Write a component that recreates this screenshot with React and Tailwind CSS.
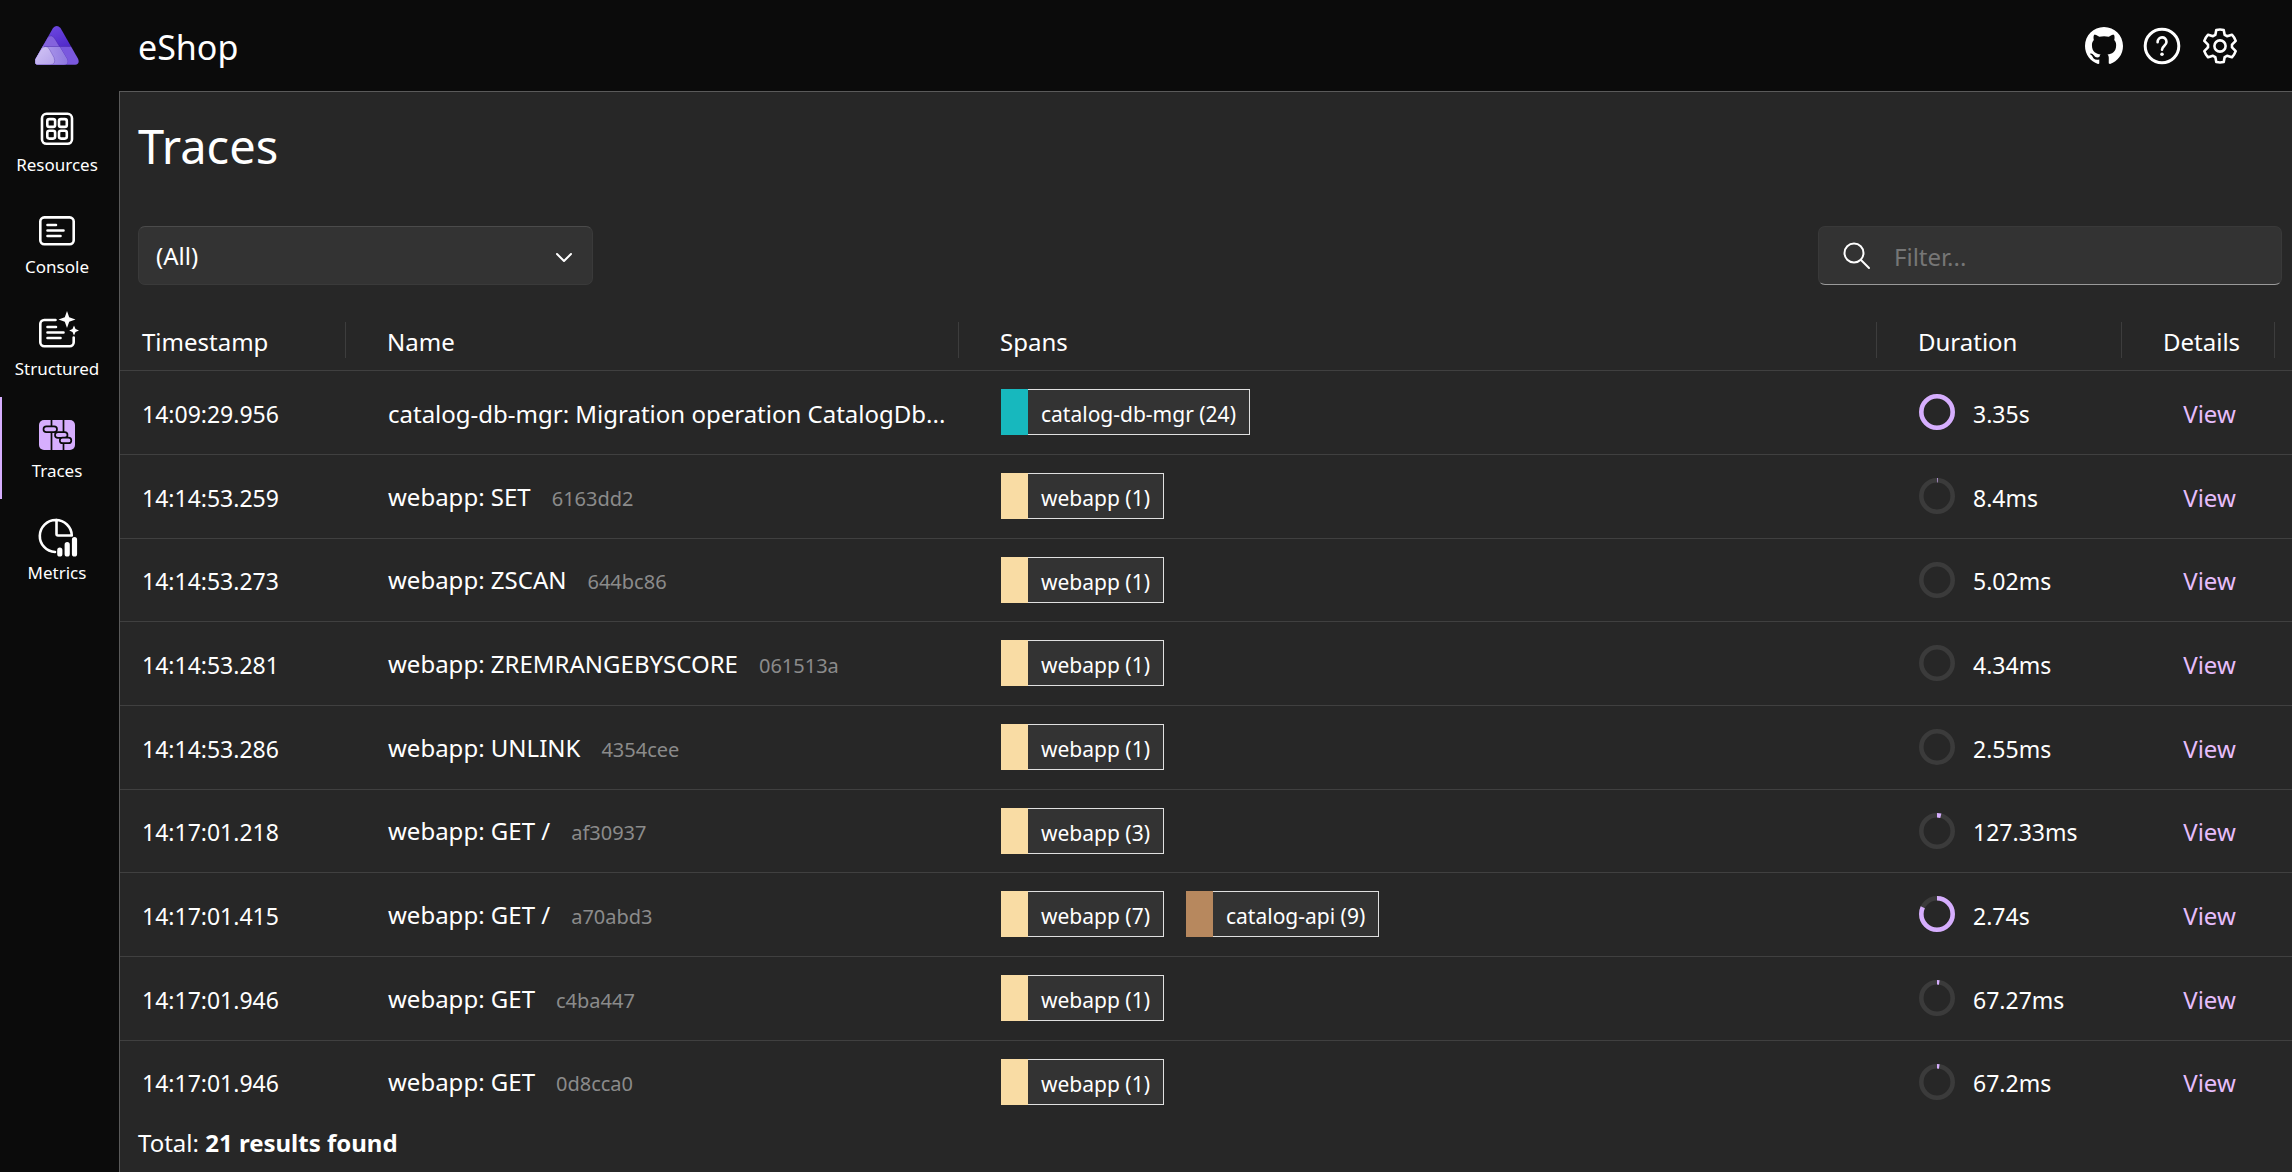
const FONT = "font-['Noto_Sans',sans-serif]";

const stroke = { fill: "none", stroke: "currentColor", strokeLinecap: "round", strokeLinejoin: "round" };

function Logo() {
  return (
    <svg width="44" height="40" viewBox="0 0 44 40" aria-hidden="true">
      <defs>
        <linearGradient id="lg-top" x1="0" y1="0" x2="1" y2="1">
          <stop offset="0.2" stopColor="#6d48e0" />
          <stop offset="1" stopColor="#4a22c4" />
        </linearGradient>
        <linearGradient id="lg-mid" x1="0" y1="0" x2="1" y2="0">
          <stop offset="0.3" stopColor="#ab98ea" />
          <stop offset="1" stopColor="#8f78e0" />
        </linearGradient>
        <linearGradient id="lg-low" x1="0" y1="0" x2="1" y2="1">
          <stop offset="0" stopColor="#d3c6f6" />
          <stop offset="1" stopColor="#b5a3ea" />
        </linearGradient>
        <clipPath id="cp-all">
          <path d="M18 2 Q21.800 -1.800 25.500 2 L43.200 33 Q45 38.700 40 38.700 H4 Q-1.500 38.700 0.500 33 Z" />
        </clipPath>
        <clipPath id="cp-lower">
          <rect y="20.500" width="44" height="20" />
        </clipPath>
      </defs>
      <g clipPath="url(#cp-all)">
        <rect width="44" height="21" fill="url(#lg-top)" />
        <rect y="20.500" width="44" height="19.500" fill="#7a58de" />
        <path id="mid" d="M12.500 11.500 Q16.700 7.500 20 13 L32 33 Q34 38.700 29 38.700 H0 V33 Z" fill="#8463dd" stroke="#3f1fa0" strokeOpacity="0.35" />
        <path d="M12.500 11.500 Q16.700 7.500 20 13 L32 33 Q34 38.700 29 38.700 H0 V33 Z" fill="url(#lg-mid)" clipPath="url(#cp-lower)" />
        <path d="M6.500 22.500 Q11 18.500 14 22.500 L19 31.500 Q21.500 38.700 15 38.700 H0 V33 Z" fill="url(#lg-low)" stroke="#5b3fb5" strokeOpacity="0.4" />
        <path d="M9 20.500 H38" stroke="#4524a8" strokeWidth="0.800" opacity="0.6" />
      </g>
    </svg>
  );
}

function ResourcesIcon() {
  return (
    <svg width="40" height="40" viewBox="0 0 40 40" {...stroke} strokeWidth="2.600" aria-hidden="true">
      <rect x="5" y="4.800" width="30" height="30" rx="4.500" />
      <rect x="10.300" y="10.100" width="7.800" height="7.800" rx="2" />
      <rect x="22" y="10.100" width="7.800" height="7.800" rx="2" />
      <rect x="10.300" y="21.800" width="7.800" height="7.800" rx="2" />
      <rect x="22" y="21.800" width="7.800" height="7.800" rx="2" />
    </svg>
  );
}

function ConsoleIcon() {
  return (
    <svg width="40" height="40" viewBox="0 0 40 40" {...stroke} strokeWidth="2.600" aria-hidden="true">
      <rect x="3.300" y="6.400" width="33.400" height="26.800" rx="4" />
      <path d="M10.500 14 H19 M10.500 19.500 H26.500 M10.500 25 H23.500" />
    </svg>
  );
}

function StructuredIcon() {
  return (
    <svg width="44" height="40" viewBox="0 0 44 40" {...stroke} strokeWidth="2.600" className="overflow-visible" aria-hidden="true">
      <path d="M20.500 7 H9.300 A4 4 0 0 0 5.300 11 V29.300 A4 4 0 0 0 9.300 33.300 H34.700 A4 4 0 0 0 38.700 29.300 V24.500" />
      <path d="M12.500 14 H21 M12.500 19.500 H28.500 M12.500 25 H25.500" />
      <path d="M32 -2 L34.200 4.200 L40.500 6.500 L34.200 8.800 L32 15 L29.800 8.800 L23.500 6.500 L29.800 4.200 Z" fill="currentColor" stroke="none" />
      <path d="M39 12.500 L40.500 16 L44 17.500 L40.500 19 L39 22.500 L37.500 19 L34.200 17.500 L37.500 16 Z" fill="currentColor" stroke="none" />
    </svg>
  );
}

function TracesIcon() {
  return (
    <svg width="40" height="40" viewBox="0 0 40 40" fill="none" aria-hidden="true">
      <rect x="2" y="5" width="36" height="30" rx="5" fill="#d6aefe" />
      <g stroke="#0b0b0b" strokeWidth="1.700">
        <path d="M14.500 5 V35 M26.500 5 V35" />
        <rect x="6.500" y="11.300" width="13.500" height="5.800" rx="2.900" fill="#d6aefe" />
        <rect x="18" y="17.100" width="12.500" height="5.800" rx="2.900" fill="#d6aefe" />
        <rect x="22.800" y="22.600" width="11.500" height="5.600" rx="2.800" fill="#d6aefe" />
      </g>
    </svg>
  );
}

function MetricsIcon() {
  return (
    <svg width="40" height="40" viewBox="0 -1 40 40" {...stroke} strokeWidth="2.600" className="overflow-visible" aria-hidden="true">
      <path d="M18 34 A16 16 0 1 1 34.800 17.500 H21 A1.500 1.500 0 0 1 19.500 16 V2" />
      <path d="M22.800 32.200 V36 M30.200 26.700 V36 M37.500 21.700 V36" strokeWidth="5.200" />
    </svg>
  );
}

function GitHubIcon() {
  return (
    <svg width="38" height="38" viewBox="0 0 16 16" fill="currentColor" aria-hidden="true">
      <path d="M8 0C3.580 0 0 3.580 0 8c0 3.540 2.290 6.530 5.470 7.590.4.070.55-.17.55-.38 0-.19-.01-.82-.01-1.490-2.010.37-2.530-.49-2.690-.94-.09-.23-.48-.94-.82-1.130-.28-.15-.68-.52-.01-.53.63-.01 1.080.58 1.230.82.72 1.210 1.870.87 2.330.66.07-.52.28-.87.51-1.070-1.780-.2-3.640-.89-3.640-3.950 0-.87.31-1.590.82-2.150-.08-.2-.36-1.020.08-2.120 0 0 .67-.21 2.200.82.64-.18 1.320-.27 2-.27s1.360.09 2 .27c1.530-1.040 2.200-.82 2.200-.82.44 1.100.16 1.920.08 2.120.51.56.82 1.270.82 2.150 0 3.070-1.870 3.750-3.650 3.950.29.25.54.73.54 1.480 0 1.070-.01 1.930-.01 2.200 0 .21.15.46.55.38A8.010 8.010 0 0 0 16 8c0-4.420-3.580-8-8-8" />
    </svg>
  );
}

function HelpIcon() {
  return (
    <svg width="38" height="38" viewBox="0 0 38 38" {...stroke} aria-hidden="true">
      <circle cx="19" cy="19" r="16.800" strokeWidth="3" />
      <path d="M14.600 15.300 C14.600 8.800 23.500 8.800 23.500 15 C23.500 18.600 19 18.800 19 22.800" strokeWidth="2.600" />
      <circle cx="19" cy="27.300" r="1.800" fill="currentColor" stroke="none" />
    </svg>
  );
}

function SettingsIcon() {
  return (
    <svg width="38" height="38" viewBox="0 0 38 38" {...stroke} strokeWidth="2.600" aria-hidden="true">
      <circle cx="19" cy="19" r="5.600" />
      <path d="M15.300 2.900 Q19 2.100 22.700 2.900 L23.700 7.900 L26 9.200 L30.900 7.700 Q33.400 10.300 34.700 13.900 L31 17.600 V20.400 L34.700 24.100 Q33.400 27.700 30.900 30.300 L26 28.800 L23.700 30.100 L22.700 35.100 Q19 35.900 15.300 35.100 L14.300 30.100 L12 28.800 L7.100 30.300 Q4.600 27.700 3.300 24.100 L7 20.400 V17.600 L3.300 13.900 Q4.600 10.300 7.100 7.700 L12 9.200 L14.300 7.900 Z" />
    </svg>
  );
}

const NAV = [
  { label: "Resources", Icon: ResourcesIcon },
  { label: "Console", Icon: ConsoleIcon },
  { label: "Structured", Icon: StructuredIcon },
  { label: "Traces", Icon: TracesIcon, active: true },
  { label: "Metrics", Icon: MetricsIcon },
];

const web = (n) => ({ name: "webapp", n, color: "bg-[#f9dca4]" });

const TRACES = [
  { time: "14:09:29.956", name: "catalog-db-mgr: Migration operation CatalogDb...", spans: [{ name: "catalog-db-mgr", n: 24, color: "bg-[#17b8be]" }], duration: "3.35s", share: 100 },
  { time: "14:14:53.259", name: "webapp: SET", id: "6163dd2", spans: [web(1)], duration: "8.4ms", share: 0.7 },
  { time: "14:14:53.273", name: "webapp: ZSCAN", id: "644bc86", spans: [web(1)], duration: "5.02ms", share: 0 },
  { time: "14:14:53.281", name: "webapp: ZREMRANGEBYSCORE", id: "061513a", spans: [web(1)], duration: "4.34ms", share: 0 },
  { time: "14:14:53.286", name: "webapp: UNLINK", id: "4354cee", spans: [web(1)], duration: "2.55ms", share: 0 },
  { time: "14:17:01.218", name: "webapp: GET /", id: "af30937", spans: [web(3)], duration: "127.33ms", share: 4 },
  { time: "14:17:01.415", name: "webapp: GET /", id: "a70abd3", spans: [web(7), { name: "catalog-api", n: 9, color: "bg-[#b7885e]" }], duration: "2.74s", share: 82 },
  { time: "14:17:01.946", name: "webapp: GET", id: "c4ba447", spans: [web(1)], duration: "67.27ms", share: 2.4 },
  { time: "14:17:01.946", name: "webapp: GET", id: "0d8cca0", spans: [web(1)], duration: "67.2ms", share: 2.4 },
];

function Ring({ share }) {
  return (
    <svg width="36" height="36" viewBox="0 0 36 36" fill="none" className="shrink-0 -rotate-90" aria-hidden="true">
      <circle cx="18" cy="18" r="15.700" stroke="#3b3b3b" strokeWidth="4.600" />
      {share > 0 && (
        <circle cx="18" cy="18" r="15.700" stroke="#d6aefe" strokeWidth="4.600" pathLength="100" strokeDasharray={`${share} 100`} />
      )}
    </svg>
  );
}

function Span({ name, n, color }) {
  return (
    <span className="flex h-[46px] items-stretch border border-l-0 border-[#e0e0e0] bg-[#333333]">
      <span className={`-my-px w-[27px] ${color}`} />
      <span className="px-[13px] pt-[10px] text-[21px] leading-[28px]">
        {name} ({n})
      </span>
    </span>
  );
}

function HeadCell({ first, children }) {
  return (
    <th scope="col" className="h-[60px] p-0 text-left align-middle font-normal">
      <div className={`flex h-[36px] items-center border-r border-[#3d3d3d] pt-1 ${first ? "pl-[22px]" : "pl-[41px]"}`}>{children}</div>
    </th>
  );
}

export default function App() {
  return (
    <div className={`flex min-h-screen flex-col bg-[#0b0b0b] text-[24px] leading-[32px] text-white ${FONT}`}>
      <header className="flex h-[91px] items-center pr-[53px]">
        <div className="flex w-[114px] justify-center">
          <Logo />
        </div>
        <div className="grow pl-6 pt-[2px] text-[34px] leading-[48px]">eShop</div>
        <div className="flex items-center gap-5">
          <a href="#github" aria-label="GitHub repository"><GitHubIcon /></a>
          <button type="button" aria-label="Help"><HelpIcon /></button>
          <button type="button" aria-label="Settings"><SettingsIcon /></button>
        </div>
      </header>

      <div className="flex grow">
        <nav className="flex w-[119px] shrink-0 flex-col">
          {NAV.map(({ label, Icon, active }) => (
            <a
              key={label}
              href={`#${label.toLowerCase()}`}
              aria-current={active ? "page" : undefined}
              className={`flex h-[102px] flex-col items-center border-l-2 pr-[7px] pt-[18px] text-[17px] leading-[24px] ${active ? "border-[#d6aefe]" : "border-transparent"}`}
            >
              <Icon />
              <span className="mt-1">{label}</span>
            </a>
          ))}
        </nav>

        <main className="flex min-w-0 grow flex-col border-l border-t border-[#5a5a5a] bg-[#272727]">
          <h1 className="pl-[18px] pt-[20px] text-[47px] leading-[68px]">Traces</h1>

          <div className="mt-[46px] flex items-center justify-between pl-[18px] pr-[10px]">
            <div className="relative w-[455px]">
              <select aria-label="Resource" className="h-[59px] w-full appearance-none rounded-[7px] border border-[#3a3a3a] border-t-[#4b4b4b] bg-[#333333] px-[17px]">
                <option>(All)</option>
              </select>
              <svg width="18" height="12" viewBox="0 0 18 12" {...stroke} strokeWidth="2" className="pointer-events-none absolute right-[20px] top-[26px]" aria-hidden="true">
                <path d="M2 2 L9 9 L16 2" />
              </svg>
            </div>
            <label className="flex h-[59px] w-[464px] items-center rounded-[7px] border border-[#393939] border-b-[#9a9a9a] bg-[#333333] pl-6">
              <svg width="28" height="28" viewBox="0 0 28 28" {...stroke} strokeWidth="2" aria-hidden="true">
                <circle cx="11" cy="11" r="9.500" />
                <path d="M18 18 L26 26" />
              </svg>
              <input type="search" aria-label="Filter traces" placeholder="Filter..." className="min-w-0 grow bg-transparent pl-[23px] pt-[2px] outline-none placeholder:text-[#767676]" />
            </label>
          </div>

          <table className="mt-[25px] w-full table-fixed border-collapse">
            <colgroup>
              <col className="w-[226px]" />
              <col className="w-[613px]" />
              <col />
              <col className="w-[245px]" />
              <col className="w-[153px]" />
              <col className="w-[17px]" />
            </colgroup>
            <thead>
              <tr className="border-b border-[#404040]">
                <HeadCell first>Timestamp</HeadCell>
                <HeadCell>Name</HeadCell>
                <HeadCell>Spans</HeadCell>
                <HeadCell>Duration</HeadCell>
                <HeadCell>Details</HeadCell>
                <td />
              </tr>
            </thead>
            <tbody>
              {TRACES.map((t, i) => (
                <tr key={i} className="h-[84px] border-b border-[#404040] last:border-b-0 nth-[3n]:h-[83px]">
                  <td className="p-0 pl-[22px] pt-[3px] text-[23px]">{t.time}</td>
                  <td className="p-0 pl-[42px] pt-[3px] whitespace-nowrap">
                    {t.name}
                    {t.id && <span className="ml-[21px] text-[20px] text-[#8b8b8b]">{t.id}</span>}
                  </td>
                  <td className="p-0 pl-[42px]">
                    <div className="flex gap-[22px]">
                      {t.spans.map((s) => (
                        <Span key={s.name} {...s} />
                      ))}
                    </div>
                  </td>
                  <td className="p-0 pl-[42px]">
                    <div className="flex items-center gap-[18px] text-[23px]">
                      <Ring share={t.share} />
                      <span className="pt-[3px]">{t.duration}</span>
                    </div>
                  </td>
                  <td className="p-0 pl-[22px] pt-[3px] text-center">
                    <a href="#trace" className="text-[#e6bdfb]">View</a>
                  </td>
                  <td />
                </tr>
              ))}
            </tbody>
          </table>

          <p className="pl-[18px] pt-[4px]">
            Total: <strong className="font-bold">21 results found</strong>
          </p>
        </main>
      </div>
    </div>
  );
}
